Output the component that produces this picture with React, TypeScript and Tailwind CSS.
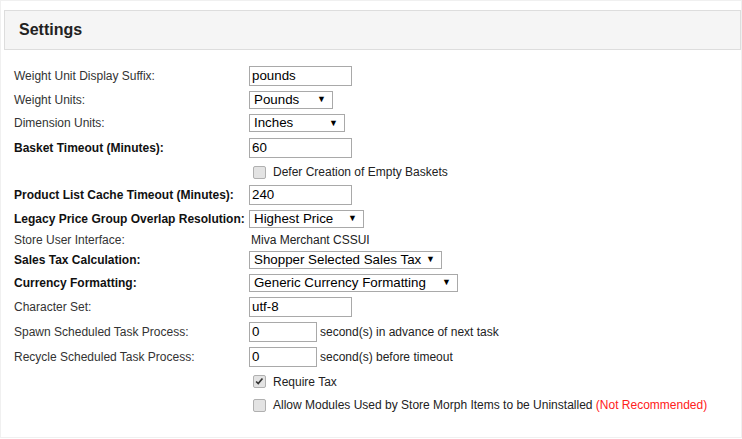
import React from 'react'

const font = { fontFamily: '"Liberation Sans", Arial, sans-serif' }

function TextBox({ value, w = 'w-[103px]' }: { value: string; w?: string }) {
  return (
    <div className={`${w} flex h-[20px] items-center border border-[#a9a9a9] bg-white pl-[2px] text-[13.33px] text-black`}>
      {value}
    </div>
  )
}

function Select({ value, w }: { value: string; w: string }) {
  return (
    <div className={`${w} flex h-[18px] items-center justify-between border border-[#a9a9a9] bg-white pl-[4px] pr-[6px] text-[13.33px] text-black`}>
      <span>{value}</span>
      <span className="text-[9px] leading-none">▼</span>
    </div>
  )
}

function Check({ checked = false, label }: { checked?: boolean; label: React.ReactNode }) {
  return (
    <div className="flex items-center gap-[7px] pl-[4px]">
      <div className="relative h-[13px] w-[13px] rounded-[2px] border border-[#b0b0b0] bg-[#e3e3e3]">
        {checked && (
          <svg viewBox="0 0 13 13" className="absolute inset-0 h-[11px] w-[11px]">
            <path d="M2.5 6.5 L5 9 L10 3" stroke="#333" strokeWidth="2" fill="none" />
          </svg>
        )}
      </div>
      <span className="text-[12px] text-[#222]">{label}</span>
    </div>
  )
}

type Row = { label?: string; bold?: boolean; h: string; value: React.ReactNode }

const rows: Row[] = [
  { label: 'Weight Unit Display Suffix:', h: 'h-[24px]', value: <TextBox value="pounds" /> },
  { label: 'Weight Units:', h: 'h-[23px]', value: <Select value="Pounds" w="w-[84px]" /> },
  { label: 'Dimension Units:', h: 'h-[24px]', value: <Select value="Inches" w="w-[96px]" /> },
  { label: 'Basket Timeout (Minutes):', bold: true, h: 'h-[25px]', value: <TextBox value="60" /> },
  { h: 'h-[24px]', value: <Check label="Defer Creation of Empty Baskets" /> },
  { label: 'Product List Cache Timeout (Minutes):', bold: true, h: 'h-[22px]', value: <TextBox value="240" /> },
  { label: 'Legacy Price Group Overlap Resolution:', bold: true, h: 'h-[25px]', value: <Select value="Highest Price" w="w-[115px]" /> },
  { label: 'Store User Interface:', h: 'h-[17px]', value: <span className="pl-[2px] text-[12px] text-[#222]">Miva Merchant CSSUI</span> },
  { label: 'Sales Tax Calculation:', bold: true, h: 'h-[23px]', value: <Select value="Shopper Selected Sales Tax" w="w-[193px]" /> },
  { label: 'Currency Formatting:', bold: true, h: 'h-[23px]', value: <Select value="Generic Currency Formatting" w="w-[209px]" /> },
  { label: 'Character Set:', h: 'h-[25px]', value: <TextBox value="utf-8" /> },
  {
    label: 'Spawn Scheduled Task Process:',
    h: 'h-[25px]',
    value: (
      <div className="flex items-center gap-[3px]">
        <TextBox value="0" w="w-[68px]" />
        <span className="text-[12px] text-[#222]">second(s) in advance of next task</span>
      </div>
    ),
  },
  {
    label: 'Recycle Scheduled Task Process:',
    h: 'h-[25px]',
    value: (
      <div className="flex items-center gap-[3px]">
        <TextBox value="0" w="w-[68px]" />
        <span className="text-[12px] text-[#222]">second(s) before timeout</span>
      </div>
    ),
  },
  { h: 'h-[25px]', value: <Check checked label="Require Tax" /> },
  {
    h: 'h-[22px]',
    value: (
      <Check
        label={
          <>
            Allow Modules Used by Store Morph Items to be Uninstalled{' '}
            <span className="text-[#ff2020]">(Not Recommended)</span>
          </>
        }
      />
    ),
  },
]

export default function App() {
  return (
    <div className="h-[439px] w-[742px] overflow-hidden bg-white" style={font}>
      <div className="h-[438px] border border-[#f0f0f0] pt-[9px]">
        <div className="ml-[3px] flex h-[40px] items-center border border-[#dddddd] bg-[#f5f5f5] pl-[14px]">
          <h1 className="text-[16px] font-bold text-[#222]">Settings</h1>
        </div>
        <div className="mt-[14px]">
          {rows.map((r, i) => (
            <div key={i} className={`flex ${r.h} items-center`}>
              <div
                className={`w-[248px] shrink-0 pl-[13px] text-[12px] ${r.bold ? 'font-bold text-[#111]' : 'text-[#333]'}`}
              >
                {r.label}
              </div>
              <div className="flex items-center">{r.value}</div>
            </div>
          ))}
        </div>
      </div>
    </div>
  )
}
